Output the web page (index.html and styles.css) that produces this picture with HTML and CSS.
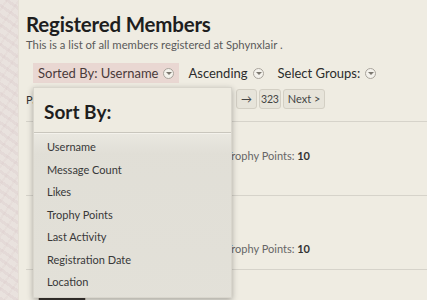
FILE: index.html
```html
<!DOCTYPE html>
<html lang="en">
<head>
  <meta charset="UTF-8" />
  <title>Registered Members</title>
  <link rel="stylesheet" href="styles.css">
</head>
<body>
  <div class="side-strip"></div>
  <div class="page">
    <h1 class="page-title">Registered Members</h1>
    <p class="page-desc">This is a list of all members registered at Sphynxlair .</p>

    <div class="sort-bar">
      <div class="sort-item active">Sorted By: Username <span class="drop-icon"></span></div>
      <div class="sort-item">Ascending <span class="drop-icon"></span></div>
      <div class="sort-item">Select Groups: <span class="drop-icon"></span></div>
    </div>

    <div class="page-nav">
      <span class="page-label">Page 1 of 323</span>
      <div class="pager">
        <a class="pager-btn">&rarr;</a>
        <a class="pager-btn num">323</a>
        <a class="pager-btn">Next &gt;</a>
      </div>
    </div>

    <ul class="member-list">
      <li class="member first">
        <div class="avatar"></div>
        <div class="member-info">
          <a class="member-name">KittyMom</a>
          <div class="member-stats">
            <span class="stat-col">Messages: 12</span>
            <span class="stat-col short">Likes: 3</span>
            <span class="stat">Trophy Points: <b>10</b></span>
          </div>
        </div>
      </li>
      <li class="member">
        <div class="avatar"></div>
        <div class="member-info">
          <a class="member-name">SphynxWTer</a>
          <div class="member-title">New Member</div>
          <div class="member-stats">
            <span class="stat-col">Messages: 9</span>
            <span class="stat-col short">Likes: 1</span>
            <span class="stat">Trophy Points: <b>10</b></span>
          </div>
        </div>
      </li>
      <li class="member last">
        <div class="avatar dark"></div>
      </li>
    </ul>

    <div class="sort-menu">
      <div class="sort-menu-title">Sort By:</div>
      <ul class="sort-menu-list">
        <li>Username</li>
        <li>Message Count</li>
        <li>Likes</li>
        <li>Trophy Points</li>
        <li>Last Activity</li>
        <li>Registration Date</li>
        <li>Location</li>
      </ul>
    </div>
  </div>
</body>
</html>
```

FILE: styles.css
```css
* {
  box-sizing: border-box;
}

html, body {
  margin: 0;
  padding: 0;
  height: 100%;
  overflow: hidden;
}

body {
  display: flex;
  background: #efece2;
  font-family: 'Lato', 'Open Sans', sans-serif;
  color: #333;
}

.side-strip {
  width: 19px;
  flex-shrink: 0;
  background-color: #e9e2de;
  background-image:
    repeating-linear-gradient(35deg, rgba(205, 180, 185, 0.18) 0 3px, transparent 3px 8px),
    repeating-linear-gradient(-55deg, rgba(215, 195, 195, 0.16) 0 2px, transparent 2px 10px);
  border-right: 1px solid #e5dfd6;
}

.page {
  position: relative;
  flex: 1;
  padding: 10px 0 0 7px;
}

.page-title {
  margin: 0;
  font-size: 20.5px;
  font-weight: 700;
  color: #1e1e1e;
  line-height: 28px;
  letter-spacing: -0.2px;
}

.page-desc {
  margin: 0;
  font-size: 11.3px;
  color: #5a5a5a;
  line-height: 14px;
}

.sort-bar {
  display: flex;
  align-items: center;
  margin: 11px 0 0 7px;
  height: 20px;
}

.sort-item {
  display: flex;
  align-items: center;
  gap: 5px;
  height: 20px;
  padding: 0 5px;
  margin-right: 4px;
  font-size: 13px;
  color: #2c2c2c;
}

.sort-item.active {
  background: #e9d7d2;
  color: #4a3a3a;
}

.drop-icon {
  display: inline-block;
  position: relative;
  width: 11px;
  height: 11px;
  border-radius: 50%;
  border: 1px solid #a9a49c;
  background: #f4f2ec;
}

.drop-icon::after {
  content: "";
  position: absolute;
  left: 2px;
  top: 3px;
  border-left: 3px solid transparent;
  border-right: 3px solid transparent;
  border-top: 3px solid #7c7870;
}

.page-nav {
  display: flex;
  align-items: center;
  margin-top: 6px;
  height: 20px;
}

.page-label {
  font-size: 11px;
  color: #333;
  width: 210px;
}

.pager {
  display: flex;
  gap: 2px;
}

.pager-btn {
  display: inline-block;
  height: 20px;
  line-height: 18px;
  padding: 0 4px;
  font-size: 11px;
  color: #444;
  border: 1px solid #d3cfc4;
  border-radius: 3px;
  background: #e7e4da;
}

.pager-btn.num {
  padding: 0 1px;
  font-size: 10.5px;
  letter-spacing: -0.2px;
}

.member-list {
  list-style: none;
  margin: 12px 0 0;
  padding: 0;
}

.member {
  display: flex;
  height: 74px;
  border-top: 1px solid #d6d3ca;
  padding: 12px 0 0 12px;
}

.member.first {
  padding-top: 8px;
}

.member.last {
  padding-top: 27px;
}

.avatar {
  width: 48px;
  height: 48px;
  background: #cfc8bb;
  border: 1px solid #c4bdb0;
}

.avatar.dark {
  background: #3a3532;
}

.member-info {
  padding-left: 14px;
}

.member-name {
  display: block;
  font-size: 13px;
  font-weight: 700;
  color: #8e827a;
  line-height: 18px;
}

.member-title {
  font-size: 11px;
  color: #888;
  line-height: 15px;
}

.member-stats {
  display: flex;
  font-size: 11px;
  color: #666;
  line-height: 15px;
  white-space: nowrap;
}

.stat-col {
  width: 76px;
}

.stat-col.short {
  width: 50px;
}

.stat b {
  color: #333;
  font-weight: 700;
}

.sort-menu {
  position: absolute;
  left: 14px;
  top: 87px;
  width: 199px;
  height: 211px;
  background: #eeebe1;
  border: 1px solid #d9d6cd;
  box-shadow: 0 2px 6px rgba(0, 0, 0, 0.3);
}

.sort-menu-title {
  height: 45px;
  padding: 12px 0 0 10px;
  font-size: 19px;
  font-weight: 700;
  color: #1e1e1e;
  border-bottom: 1px solid #c9c6bd;
}

.sort-menu-list {
  list-style: none;
  margin: 0;
  padding: 2px 0 0;
  height: 164px;
  background: linear-gradient(to bottom, rgba(233, 231, 224, 0.95), rgba(224, 222, 214, 0.95) 12%, rgba(226, 224, 216, 0.95));
  border-top: 1px solid #f4f2ec;
}

.sort-menu-list li {
  padding-left: 13px;
  font-size: 11px;
  line-height: 22.5px;
  color: #383838;
}
```
